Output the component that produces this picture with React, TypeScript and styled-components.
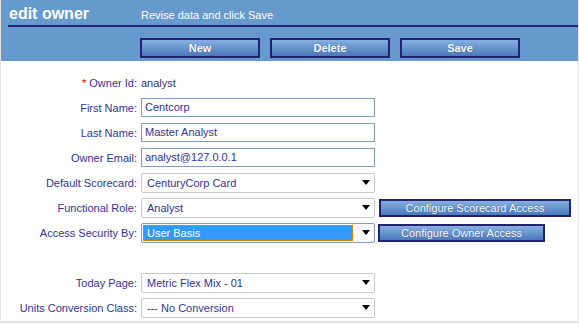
import styled, { createGlobalStyle } from "styled-components";

const GlobalStyle = createGlobalStyle`
  html, body {
    margin: 0;
    padding: 0;
    background: #ffffff;
  }
  body {
    font-family: "Liberation Sans", Arial, sans-serif;
  }
`;

const Panel = styled.div`
  width: 579px;
  height: 323px;
  box-sizing: border-box;
  border-left: 1px solid #e2e2e2;
  border-right: 1px solid #e2e2e2;
  border-bottom: 2px solid #e2e2e2;
`;

const Header = styled.div`
  background: #6699cc;
  height: 61px;
  box-sizing: border-box;
  padding-top: 2px;
`;

const TitleRow = styled.div`
  margin-left: 7px;
  height: 23px;
  border-bottom: 2px solid #25257a;
  display: flex;
  align-items: center;
`;

const Title = styled.h1`
  margin: 0;
  width: 133px;
  padding-left: 1px;
  box-sizing: border-box;
  font-size: 16px;
  font-weight: bold;
  color: #ffffff;
`;

const Subtitle = styled.span`
  font-size: 11px;
  color: #ffffff;
  padding-top: 3px;
`;

const ButtonRow = styled.div`
  display: flex;
  gap: 10px;
  padding-left: 139px;
  margin-top: 11px;
`;

const ActionButton = styled.button`
  width: 120px;
  height: 20px;
  box-sizing: border-box;
  border: 2px solid #22226e;
  background: linear-gradient(#86b0e0, #4a79ba);
  color: #ffffff;
  font-family: "Liberation Sans", Arial, sans-serif;
  font-size: 11px;
  font-weight: bold;
  padding: 0;
  text-shadow: 0 0 1px #2a4f85;
`;

const Form = styled.div`
  display: grid;
  grid-template-columns: 136px 234px auto;
  column-gap: 4px;
  grid-auto-rows: 25px;
  align-items: center;
  padding-top: 9px;
`;

const Label = styled.div`
  text-align: right;
  font-size: 11px;
  color: #333399;
  white-space: nowrap;
`;

const Required = styled.span`
  color: #cc0000;
`;

const Value = styled.div`
  font-size: 11px;
  color: #333366;
  grid-column: span 2;
`;

const TextInput = styled.div`
  height: 19px;
  box-sizing: border-box;
  border: 1px solid #7f9db9;
  font-size: 11px;
  color: #333399;
  padding-left: 3px;
  line-height: 17px;
  background: #ffffff;
`;

const SelectBox = styled.div<{ $focused?: boolean }>`
  height: 20px;
  box-sizing: border-box;
  border: 1px solid ${(p) => (p.$focused ? "#7f9db9" : "#cacaca")};
  border-radius: 2px;
  background: #ffffff;
  display: flex;
  align-items: center;
  padding: 0 3px 0 1px;
  gap: 4px;
`;

const SelectText = styled.span<{ $focused?: boolean }>`
  flex: 1;
  height: 16px;
  box-sizing: border-box;
  line-height: 14px;
  font-size: 11px;
  padding-left: 3px;
  color: ${(p) => (p.$focused ? "#ffffff" : "#333399")};
  background: ${(p) => (p.$focused ? "#3399ff" : "transparent")};
  border: 1px dotted ${(p) => (p.$focused ? "#e08a00" : "transparent")};
`;

const Arrow = styled.svg`
  width: 8px;
  height: 5px;
  margin-right: 1px;
  margin-left: 5px;
`;

const SideButton = styled.button<{ $width: number; $shift: number }>`
  width: ${(p) => p.$width}px;
  height: 18px;
  margin-left: ${(p) => p.$shift}px;
  box-sizing: border-box;
  border: 2px solid #22226e;
  background: linear-gradient(#86b0e0, #4a79ba);
  color: #ffffff;
  font-family: "Liberation Sans", Arial, sans-serif;
  font-size: 11px;
  padding: 0;
  text-shadow: 0 0 1px #2a4f85;
`;

const Spacer = styled.div`
  grid-column: 1 / -1;
`;

function Select({ value, focused }: { value: string; focused?: boolean }) {
  return (
    <SelectBox $focused={focused}>
      <SelectText $focused={focused}>{value}</SelectText>
      <Arrow viewBox="0 0 8 5">
        <path d="M0 0 H8 L4 5 Z" fill="#000000" />
      </Arrow>
    </SelectBox>
  );
}

export default function App() {
  return (
    <>
      <GlobalStyle />
      <Panel>
        <Header>
          <TitleRow>
            <Title>edit owner</Title>
            <Subtitle>Revise data and click Save</Subtitle>
          </TitleRow>
          <ButtonRow>
            <ActionButton>New</ActionButton>
            <ActionButton>Delete</ActionButton>
            <ActionButton>Save</ActionButton>
          </ButtonRow>
        </Header>
        <Form>
          <Label>
            <Required>*</Required> Owner Id:
          </Label>
          <Value>analyst</Value>

          <Label>First Name:</Label>
          <TextInput>Centcorp</TextInput>
          <span />

          <Label>Last Name:</Label>
          <TextInput>Master Analyst</TextInput>
          <span />

          <Label>Owner Email:</Label>
          <TextInput>analyst@127.0.0.1</TextInput>
          <span />

          <Label>Default Scorecard:</Label>
          <Select value="CenturyCorp Card" />
          <span />

          <Label>Functional Role:</Label>
          <Select value="Analyst" />
          <div>
            <SideButton $width={192} $shift={0}>Configure Scorecard Access</SideButton>
          </div>

          <Label>Access Security By:</Label>
          <Select value="User Basis" focused />
          <div>
            <SideButton $width={167} $shift={-1}>Configure Owner Access</SideButton>
          </div>

          <Spacer />

          <Label>Today Page:</Label>
          <Select value="Metric Flex Mix - 01" />
          <span />

          <Label>Units Conversion Class:</Label>
          <Select value="--- No Conversion" />
          <span />
        </Form>
      </Panel>
    </>
  );
}
